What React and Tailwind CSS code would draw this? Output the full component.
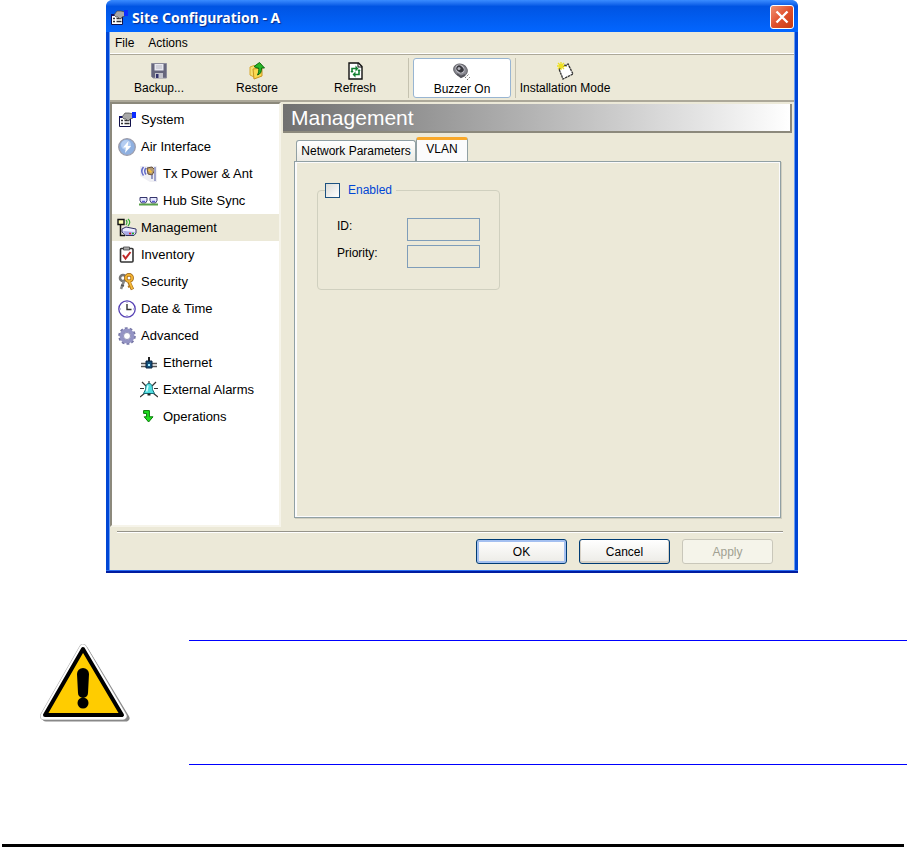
import { useState } from 'react';

function PropertiesIcon() {
  return (
    <svg width="18" height="16" viewBox="0 0 18 16" className="shrink-0">
      <path d="M1.5 4.5h11v10h-11z" fill="#fff" stroke="#10104a" />
      <path d="M1 4h12v2H1z" fill="#10106a" />
      <path d="M3 8.5h2M3 11.5h2M6.500 8.500h5M6.500 11.500h5" stroke="#333" strokeWidth="1.3" />
      <path d="M4 5l3-4h4l4 1v4l-3 1-2 2-2-2-2 0z" fill="#a8a8a8" stroke="#444" strokeWidth=".7" />
      <path d="M14 0h4v6h-4z" fill="#0a2cff" />
    </svg>
  );
}

function AirIcon() {
  return (
    <svg width="18" height="18" viewBox="0 0 18 18">
      <circle cx="9" cy="9" r="8.3" fill="#8fb0e0" stroke="#9a9aa8" strokeWidth="1.2" />
      <circle cx="8" cy="7" r="5" fill="#b4cdf2" />
      <path d="M10.500 3L5 9.500h3L7 15l6-7h-3.300z" fill="#fff" />
    </svg>
  );
}

function AntennaIcon() {
  return (
    <svg width="18" height="18" viewBox="0 0 18 18">
      <path d="M0 1h17v16H10L0 11z" fill="#efeff4" />
      <path d="M3.500 2Q0 6 3.500 10.500M6 3Q3.500 6 6 9.500" fill="none" stroke="#6068c8" strokeWidth="1.500" />
      <path d="M7 3l5-1 3 3-3 5-4-1z" fill="#b49a70" stroke="#66503c" />
      <path d="M8.500 4.500l3 3" stroke="#f4c040" strokeWidth="2" />
      <path d="M14 2h2v14h-2z" fill="#a0a4cc" />
      <path d="M12 10v4" stroke="#777cb0" strokeWidth="1.500" />
    </svg>
  );
}

function HubIcon() {
  return (
    <svg width="19" height="10" viewBox="0 0 19 10">
      <path d="M1 1.500h7v3L6.500 7h-4L1 4.500zM11 1.500h7v3L16.500 7h-4L11 4.500z" fill="#e6e8ff" stroke="#34346c" />
      <path d="M3 5.500h3M13 5.500h3" stroke="#5a5ad0" strokeWidth="1.500" />
      <path d="M0 8.500h19" stroke="#58a048" strokeWidth="2" />
    </svg>
  );
}

function ManagementIcon() {
  return (
    <svg width="20" height="19" viewBox="0 0 20 19">
      <path d="M3.500 6v11.500H8" fill="none" stroke="#111" strokeWidth="1.500" />
      <path d="M1 1.500h6v5H1z" fill="#ffffb0" stroke="#111" strokeWidth="1.400" />
      <path d="M9 2q2 2 0 5M11 1q3.500 3 0 7" fill="none" stroke="#35a835" strokeWidth="1.200" />
      <path d="M5 11l4-2 10 2v4l-2 2.500H9L5 14z" fill="#ececff" stroke="#333366" />
      <path d="M6 13l12 1-2 3H9z" fill="#a8a8e8" />
      <path d="M12 15.500h2" stroke="#e02020" strokeWidth="1.500" />
      <path d="M15 15.500h2" stroke="#20b020" strokeWidth="1.500" />
    </svg>
  );
}

function InventoryIcon() {
  return (
    <svg width="16" height="17" viewBox="0 0 16 17">
      <rect x="1.500" y="2.500" width="12.500" height="13.500" rx="1" fill="#fff" stroke="#333" strokeWidth="1.600" />
      <path d="M4.500 1h6v3h-6z" fill="#aaa" stroke="#444" strokeWidth=".8" />
      <path d="M4 9l2.500 3.500L11.500 6" fill="none" stroke="#c02828" strokeWidth="2" />
    </svg>
  );
}

function KeysIcon() {
  return (
    <svg width="17" height="18" viewBox="0 0 17 18">
      <circle cx="5" cy="5" r="3" fill="none" stroke="#777" strokeWidth="2.600" />
      <path d="M6 8l-3 8" stroke="#888" strokeWidth="2.600" />
      <path d="M3 12l3 1" stroke="#555" strokeWidth="1.500" />
      <circle cx="11" cy="5" r="3.200" fill="#fff" stroke="#9c6414" strokeWidth="3.400" />
      <circle cx="11" cy="5" r="3.200" fill="none" stroke="#f0b030" strokeWidth="2" />
      <path d="M11 9l3.500 7.500" stroke="#9c6414" strokeWidth="3.400" />
      <path d="M11 8l3.300 8" stroke="#f4b838" strokeWidth="2" />
      <path d="M12 13l-2 1" stroke="#b87818" strokeWidth="2" />
    </svg>
  );
}

function ClockIcon() {
  return (
    <svg width="18" height="18" viewBox="0 0 18 18">
      <circle cx="9" cy="9" r="8.200" fill="#fff" stroke="#5540b4" strokeWidth="1.300" />
      <path d="M9 4v5.500h4.500" fill="none" stroke="#333" strokeWidth="1.400" />
      <path d="M9 2v1M9 15v1M2 9h1M15 9h1" stroke="#8888bb" />
    </svg>
  );
}

function GearIcon() {
  return (
    <svg width="18" height="18" viewBox="0 0 18 18">
      <circle cx="9" cy="9" r="7.500" fill="none" stroke="#7474a4" strokeWidth="2.600" strokeDasharray="2.700 2.012" />
      <circle cx="9" cy="9" r="5.500" fill="#f4f4fa" stroke="#9494c4" strokeWidth="4" />
      <circle cx="9" cy="9" r="3.500" fill="#fff" stroke="#7c7ca8" strokeWidth=".8" />
    </svg>
  );
}

function EthernetIcon() {
  return (
    <svg width="16" height="12" viewBox="0 0 16 12">
      <path d="M0 6.500h6M0 9.500h6M11 6.500h5M11 9.500h5" stroke="#555" strokeWidth="1.500" />
      <path d="M8 0v5" stroke="#222" strokeWidth="2" />
      <path d="M5 4h6v7H5z" fill="#14507c" stroke="#0c2440" />
      <path d="M7 7h2v2H7z" fill="#a4ecff" />
    </svg>
  );
}

function AlarmIcon() {
  return (
    <svg width="18" height="17" viewBox="0 0 18 17">
      <path d="M2 1l4 4M16 1l-4 4M0 7.500h4M14 7.500h4M0 16l5-4M18 16l-5-4M9 0v2" stroke="#333" strokeWidth="1.200" />
      <path d="M9 2.500c-3 0-3.500 3-3.500 6l-2 4h11l-2-4c0-3-.5-6-3.500-6z" fill="#50dce0" stroke="#186c74" />
      <path d="M8 4.500l-1.300 6" stroke="#d8ffff" strokeWidth="1.500" />
      <path d="M7.500 13.500h3" stroke="#222" strokeWidth="2" />
    </svg>
  );
}

function OperationsIcon() {
  return (
    <svg width="11" height="13" viewBox="0 0 11 13">
      <path d="M.6.600h5.800v6.200h3.600L5.600 12 1.200 6.800h2.400V3.400h-3z" fill="#20e020" stroke="#087808" />
    </svg>
  );
}

function DiskIcon() {
  return (
    <svg width="16" height="16" viewBox="0 0 16 16">
      <path d="M.5.500h15v14.500H2L.500 13.500z" fill="#66667c" stroke="#8c8c9c" />
      <path d="M3.500 1h9v6.500h-9z" fill="#e8e8f0" />
      <path d="M5 3h6M5 5h6" stroke="#b8b8c4" />
      <path d="M4 10h8v5H4z" fill="#c4c4cc" />
      <path d="M5 11h2.500v4H5z" fill="#33336c" />
    </svg>
  );
}

function RestoreIcon() {
  return (
    <svg width="16" height="18" viewBox="0 0 16 18">
      <path d="M1 5l4-1.500L7 5v11l-6-3z" fill="#f8e070" stroke="#d8a830" />
      <path d="M4 7l9-1v8l-8 3z" fill="#fcd850" stroke="#c89420" />
      <path d="M5 4.500L10.500.5l5 5.500h-3c0 4-1 6-4 7 1.500-3 1.500-5 1-7H8z" fill="#28b828" stroke="#0c680c" />
    </svg>
  );
}

function RefreshIcon() {
  return (
    <svg width="15" height="18" viewBox="0 0 15 18">
      <path d="M1 1h9.500L14 4.500V17H1z" fill="#fff" stroke="#111" strokeWidth="1.400" />
      <path d="M10 1v4h4" fill="none" stroke="#111" />
      <path d="M4 9V6.500h5M11 9v3.500H6" fill="none" stroke="#128032" strokeWidth="1.600" />
      <path d="M7.500 3.500l3 3-3 3zM7.500 9.500v6l-3-3zM2.300 9h3.400L4 11zM9.300 9h3.400L11 7z" fill="#128032" />
    </svg>
  );
}

function BuzzerIcon() {
  return (
    <svg width="18" height="18" viewBox="0 0 18 18">
      <ellipse cx="7.500" cy="7" rx="7" ry="5.800" fill="#888890" stroke="#66666c" transform="rotate(25 7.500 7)" />
      <ellipse cx="7" cy="6" rx="4.500" ry="3.600" fill="#36363c" stroke="#c4c4cc" transform="rotate(40 7 6)" />
      <circle cx="6" cy="5.500" r="1.500" fill="#b4b4bc" />
      <path d="M4 11l4 3 4-2" stroke="#55555c" fill="none" strokeWidth="2" />
      <path d="M12 15l4-4M14 17l3-3" stroke="#777" strokeDasharray="1.500 1" />
    </svg>
  );
}

function InstallIcon() {
  return (
    <svg width="18" height="18" viewBox="0 0 18 18">
      <path d="M3 7l9-5 5 10-10 5z" fill="#fff" stroke="#333" strokeWidth="1.300" strokeDasharray="2.500 .6" />
      <path d="M5 0v8M1 4h9M2 1l6 6M8 1L2 7" stroke="#eee020" strokeWidth="1.300" />
      <path d="M8 3l3 1" stroke="#333" />
    </svg>
  );
}

const NAV_ITEMS = [
  { label: 'System', icon: PropertiesIcon },
  { label: 'Air Interface', icon: AirIcon },
  { label: 'Tx Power & Ant', icon: AntennaIcon, child: true },
  { label: 'Hub Site Sync', icon: HubIcon, child: true },
  { label: 'Management', icon: ManagementIcon },
  { label: 'Inventory', icon: InventoryIcon },
  { label: 'Security', icon: KeysIcon },
  { label: 'Date & Time', icon: ClockIcon },
  { label: 'Advanced', icon: GearIcon },
  { label: 'Ethernet', icon: EthernetIcon, child: true },
  { label: 'External Alarms', icon: AlarmIcon, child: true },
  { label: 'Operations', icon: OperationsIcon, child: true },
];

function ToolButton({ label, icon: Icon, className }) {
  return (
    <button className={`flex h-10 flex-col items-center justify-between pt-1 pb-0.5 text-xs leading-4 ${className}`}>
      <span className="flex h-[18px] items-center"><Icon /></span>
      {label}
    </button>
  );
}

function TitleBar() {
  return (
    <header className="flex h-8 items-center justify-between rounded-t-md bg-linear-to-b from-[#3a8cff] via-[#0054e3] via-20% to-[#0366ff] px-1">
      <div className="flex items-center gap-1 pt-1">
        <PropertiesIcon />
        <h1 className="font-['Noto_Sans',sans-serif] text-sm font-bold text-white [text-shadow:1px_1px_1px_#0a2c8c]">
          Site Configuration - A
        </h1>
      </div>
      <button
        aria-label="Close"
        className="mt-0.5 flex size-6 items-center justify-center rounded-[3px] border border-white bg-linear-to-br from-[#f09070] via-[#e0502c] to-[#c83c10]"
      >
        <svg width="14" height="14" viewBox="0 0 14 14">
          <path d="M1.500 1.500l11 11M12.500 1.500l-11 11" stroke="#fff" strokeWidth="2.400" />
        </svg>
      </button>
    </header>
  );
}

function Toolbar() {
  return (
    <div className="flex h-[46px] items-center border-b-2 border-[#aca899]">
      <ToolButton label="Backup..." icon={DiskIcon} className="w-[98px]" />
      <ToolButton label="Restore" icon={RestoreIcon} className="w-[98px]" />
      <ToolButton label="Refresh" icon={RefreshIcon} className="w-[98px]" />
      <div className="ml-1 h-10 w-px bg-[#c5c2b0]" />
      <ToolButton label="Buzzer On" icon={BuzzerIcon} className="mx-1 w-[98px] rounded-[3px] border border-[#98b5d2] bg-white" />
      <div className="h-10 w-px bg-[#c5c2b0]" />
      <ToolButton label="Installation Mode" icon={InstallIcon} className="w-[98px] whitespace-nowrap" />
    </div>
  );
}

function Sidebar({ active, onSelect }) {
  return (
    <nav className="w-[171px] shrink-0 border-2 border-t-[#8c897c] border-r-[#f6f4ea] border-b-[#f6f4ea] border-l-[#8c897c] bg-white pt-0.5">
      {NAV_ITEMS.map(({ label, icon: Icon, child }) => (
        <button
          key={label}
          onClick={() => onSelect(label)}
          className={`flex h-[27px] w-full items-center gap-1 text-left text-[13px] ${child ? 'pl-[26px]' : 'pl-1'} ${
            active === label ? 'bg-[#ece9d8]' : ''
          }`}
        >
          <span className="flex w-[21px] shrink-0 justify-center"><Icon /></span>
          {label}
        </button>
      ))}
    </nav>
  );
}

function VlanTab() {
  const [enabled, setEnabled] = useState(false);

  return (
    <div className="flex flex-1 flex-col border border-[#91a0a4] pt-5 pl-[22px] shadow-[inset_2px_1px_0_#fbfbfc,inset_-1px_-1px_0_#fbfbfc,1px_1px_0_#d0cebf]">
      <fieldset className="h-[108px] w-[181px] rounded-[4px] border border-[#d0d0bf] px-[19px] text-xs">
        <legend className="-ml-3 pr-1">
          <label className="flex items-center gap-2 text-[#0046d5]">
            <input
              type="checkbox"
              checked={enabled}
              onChange={(e) => setEnabled(e.target.checked)}
              className="size-[15px] appearance-none border border-[#1c5180] bg-linear-to-br from-[#dcdcd7] to-white checked:bg-[#21a121]"
            />
            Enabled
          </label>
        </legend>
        <div className="mt-5 grid grid-cols-[70px_73px] gap-y-1">
          <label htmlFor="vlan-id" className="leading-4">ID:</label>
          <input id="vlan-id" disabled={!enabled} className="h-[23px] w-full border border-[#7f9db9] px-1" />
          <label htmlFor="vlan-priority" className="leading-4">Priority:</label>
          <input id="vlan-priority" disabled={!enabled} className="h-[23px] w-full border border-[#7f9db9] px-1" />
        </div>
      </fieldset>
    </div>
  );
}

function Content() {
  return (
    <section className="flex min-w-0 flex-1 flex-col pt-0.5 pr-0.5 pl-0.5">
      <h2 className="h-[29px] border-r-2 border-b-2 border-[#8c897c] bg-linear-to-r from-[#707070] to-white pl-2 text-[21px] leading-7 text-white">
        Management
      </h2>
      <div className="flex flex-1 flex-col pt-1 pr-[11px] pb-[9px] pl-[11px]">
        <div role="tablist" className="flex items-end pl-0.5 text-xs">
          <button role="tab" className="h-[21px] w-[120px] rounded-t-[3px] border border-b-0 border-[#91a0a4] bg-linear-to-b from-white to-[#ecebe4] whitespace-nowrap">
            Network Parameters
          </button>
          <button role="tab" aria-selected="true" className="-mb-px h-[25px] w-[52px] rounded-t-[3px] border border-t-[3px] border-b-0 border-[#91a0a4] border-t-[#f9a828] bg-[#fbfbfc] pb-1">
            VLAN
          </button>
        </div>
        <VlanTab />
      </div>
    </section>
  );
}

function WarningSign() {
  return (
    <svg width="92" height="80" viewBox="0 0 92 80" role="img" aria-label="Warning">
      <path d="M46 6L87 74H7z" fill="#888" stroke="#888" strokeWidth="7" strokeLinejoin="round" />
      <path d="M44 4L84 72H5z" fill="#fff" stroke="#aaa" strokeWidth="8" strokeLinejoin="round" />
      <path d="M44 4L84 72H5z" fill="#fff" stroke="#fff" strokeWidth="7" strokeLinejoin="round" />
      <path d="M44 5L83 71H6z" fill="#fc0" stroke="#000" strokeWidth="4" strokeLinejoin="round" />
      <path d="M38 30a6 6 0 0 1 12 0l-1 19a5 5 0 0 1-10 0z" />
      <circle cx="44" cy="59" r="5.500" />
    </svg>
  );
}

export default function App() {
  const [active, setActive] = useState('Management');

  return (
    <div className="bg-white pb-4 font-['Liberation_Sans',Arial,sans-serif] text-black">
      <main className="mr-[109px] ml-[106px] rounded-t-lg bg-[#0046d5]">
        <TitleBar />
        <div className="mx-[3px] border-x border-[#6b9cf0] bg-[#ece9d8]">
          <div className="flex h-[22px] items-center gap-[14px] border-b border-white pl-[5px] text-xs">
            <button>File</button>
            <button>Actions</button>
          </div>
          <div className="h-0.5 border-t border-[#aca899]" />
          <Toolbar />
          <div className="flex h-[425px]">
            <Sidebar active={active} onSelect={setActive} />
            <Content />
          </div>
          <footer className="px-[7px] pt-1 pb-1.5">
            <div className="mr-1 h-0.5 border-t border-[#96948a] bg-white" />
            <div className="mt-1.5 flex justify-end gap-3 pr-[14px] text-xs">
              <button className="h-[25px] w-[91px] rounded-[3px] border border-[#003c74] bg-linear-to-b from-white to-[#ecebe6] shadow-[inset_0_0_0_2px_#a4c0f0]">OK</button>
              <button className="h-[25px] w-[91px] rounded-[3px] border border-[#003c74] bg-linear-to-b from-white to-[#ecebe6] shadow-[inset_0_-1px_0_1px_#d6d0c5]">Cancel</button>
              <button disabled className="h-[25px] w-[91px] rounded-[3px] border border-[#c9c7ba] bg-[#f5f4ea] text-[#a1a192]">Apply</button>
            </div>
          </footer>
        </div>
        <div className="h-[3px] border-t border-[#2c6cf0] bg-[#001ca0]" />
      </main>

      <section className="mt-[67px] flex">
        <div className="w-[189px] pt-1 pl-[39px]"><WarningSign /></div>
        <div className="h-[125px] flex-1 border-y border-[#0000ff]" />
      </section>

      <hr className="mt-[79px] mr-[3px] ml-0.5 border-t-[3px] border-black" />
    </div>
  );
}
